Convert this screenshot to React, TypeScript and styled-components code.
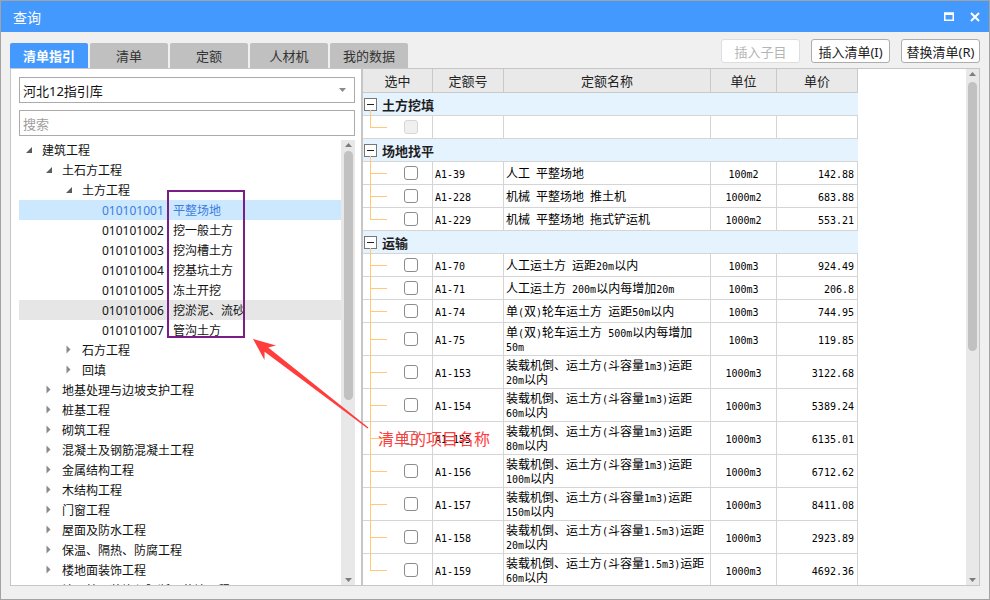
import React from "react";
import styled, { createGlobalStyle } from "styled-components";

const GlobalStyle = createGlobalStyle`
  html, body {
    margin: 0;
    padding: 0;
    background: #ffffff;
  }
  body {
    font-family: "Noto Sans", "Noto Sans CJK SC", sans-serif;
  }
  * {
    box-sizing: border-box;
  }
`;

const ORANGE = "#ffc977";
const GRID = "#d5d5d5";

const Window = styled.div`
    position: relative;
    width: 990px;
    height: 600px;
    border: 1px solid #a3a3a3;
    background: #f0f0f0;
    display: flex;
    flex-direction: column;
    overflow: hidden;
`;

const TitleBar = styled.div`
    flex: none;
    height: 31px;
    background: #4499ff;
    color: #ffffff;
    display: flex;
    align-items: center;
    padding: 0 1px 0 12px;
`;

const TitleText = styled.div`
    flex: 1;
    font-size: 14px;
`;

const TitleButton = styled.div`
    width: 26px;
    height: 20px;
    display: flex;
    align-items: center;
    justify-content: center;
`;

const Body = styled.div`
    flex: 1;
    display: flex;
    flex-direction: column;
    padding: 0 9px;
`;

const TopRow = styled.div`
    flex: none;
    height: 36px;
    display: flex;
    justify-content: space-between;
    align-items: flex-end;
`;

const Tabs = styled.div`
    display: flex;
    gap: 2px;
`;

const Tab = styled.div<{ $active?: boolean }>`
    width: 78px;
    height: 25px;
    display: flex;
    align-items: center;
    justify-content: center;
    border-radius: 2px 2px 0 0;
    background: ${(p) => (p.$active ? "#4499ff" : "#c0c0c0")};
    color: ${(p) => (p.$active ? "#ffffff" : "#333333")};
    font-size: 13px;
    font-weight: ${(p) => (p.$active ? 700 : 400)};
`;

const Actions = styled.div`
    align-self: flex-start;
    margin-top: 7px;
    display: flex;
    gap: 11px;
`;

const ActionButton = styled.div<{ $disabled?: boolean }>`
    width: 79px;
    height: 24px;
    display: flex;
    align-items: center;
    justify-content: center;
    background: #ffffff;
    border: 1px solid ${(p) => (p.$disabled ? "#dedede" : "#adadad")};
    border-radius: 3px;
    color: ${(p) => (p.$disabled ? "#b4b4b4" : "#1a1a1a")};
    font-size: 13px;
`;

const Content = styled.div`
    flex: none;
    height: 518px;
    display: flex;
`;

const LeftPanel = styled.div`
    width: 352px;
    background: #ffffff;
    border: 1px solid #c6c6c6;
    padding: 8px 6px 0 8px;
    display: flex;
    flex-direction: column;
`;

const Field = styled.div<{ $placeholder?: boolean }>`
    flex: none;
    height: 26px;
    border: 1px solid #ababab;
    display: flex;
    align-items: center;
    padding: 0 8px 0 3px;
    font-size: 13px;
    color: ${(p) => (p.$placeholder ? "#a0a0a0" : "#111111")};
    & + & {
        margin-top: 7px;
    }
`;

const FieldText = styled.div`
    flex: 1;
`;

const Tree = styled.div`
    flex: 1;
    margin-top: 4px;
    display: flex;
    overflow: hidden;
`;

const TreeList = styled.div`
    flex: 1;
    overflow: hidden;
`;

const TreeRow = styled.div<{ $level: number; $selected?: boolean; $hover?: boolean }>`
    height: 20px;
    display: flex;
    align-items: center;
    padding-left: ${(p) => p.$level * 20}px;
    font-size: 12px;
    white-space: nowrap;
    color: ${(p) => (p.$selected ? "#3b7ee0" : "#111111")};
    background: ${(p) => (p.$selected ? "#cce8ff" : p.$hover ? "#e6e6e6" : "transparent")};
`;

const Toggle = styled.div`
    flex: none;
    width: 23px;
    height: 20px;
`;

const TreeCode = styled.span`
    flex: none;
    width: 71px;
`;

const ScrollTrack = styled.div<{ $width: number }>`
    flex: none;
    width: ${(p) => p.$width}px;
    background: #e8e8e8;
    display: flex;
    flex-direction: column;
    align-items: center;
`;

const ScrollThumb = styled.div<{ $top: number; $height: number }>`
    margin-top: ${(p) => p.$top}px;
    width: 9px;
    height: ${(p) => p.$height}px;
    border-radius: 5px;
    background: #c1c1c1;
`;

const ScrollFill = styled.div`
    flex: 1;
`;

const RightPanel = styled.div`
    flex: 1;
    background: #ffffff;
    border: 1px solid #c6c6c6;
    display: flex;
`;

const TableArea = styled.div`
    flex: 1;
    overflow: hidden;
`;

const HeaderRow = styled.div`
    width: 495px;
    height: 24px;
    display: flex;
    background: #e9e9e9;
    border-bottom: 1px solid #c9c9c9;
`;

const HeaderCell = styled.div<{ $w: number }>`
    width: ${(p) => p.$w}px;
    flex: none;
    border-right: 1px solid #c9c9c9;
    display: flex;
    align-items: center;
    justify-content: center;
    font-size: 13px;
    color: #222222;
`;

const GroupRow = styled.div`
    position: relative;
    width: 495px;
    height: 23px;
    display: flex;
    align-items: center;
    background: #e5f3ff;
    border-bottom: 1px solid ${GRID};
    &::after {
        content: "";
        position: absolute;
        left: 7px;
        top: 17px;
        bottom: -1px;
        width: 1px;
        background: ${ORANGE};
    }
`;

const MinusBox = styled.div`
    margin-left: 1px;
    width: 13px;
    height: 13px;
    border: 1px solid #777777;
    background: #ffffff;
    display: flex;
    align-items: center;
    justify-content: center;
    &::before {
        content: "";
        width: 7px;
        height: 1px;
        background: #222222;
    }
`;

const GroupTitle = styled.div`
    margin-left: 5px;
    font-size: 13px;
    font-weight: 700;
    color: #1e1e1e;
`;

const ItemRow = styled.div<{ $h: number }>`
    width: 495px;
    height: ${(p) => p.$h}px;
    display: flex;
    border-bottom: 1px solid ${GRID};
    font-family: "Noto Sans CJK SC", sans-serif;
    font-size: 12px;
    color: #000000;
`;

const Cell = styled.div<{ $w: number; $align?: "left" | "center" | "right" }>`
    width: ${(p) => p.$w}px;
    flex: none;
    border-right: 1px solid ${GRID};
    display: flex;
    flex-direction: column;
    justify-content: center;
    align-items: ${(p) => (p.$align === "center" ? "center" : p.$align === "right" ? "flex-end" : "flex-start")};
    padding: 0 ${(p) => (p.$align === "right" ? 3 : 0)}px 0 ${(p) => (p.$align === "left" ? 2 : 0)}px;
    white-space: nowrap;
`;

const TextLine = styled.div`
    height: 14px;
    line-height: 14px;
    overflow: visible;
`;

const LineCell = styled.div<{ $last?: boolean }>`
    position: relative;
    width: 70px;
    flex: none;
    border-right: 1px solid ${GRID};
    display: flex;
    align-items: center;
    padding-left: 41px;
    &::before {
        content: "";
        position: absolute;
        left: 7px;
        top: 0;
        height: ${(p) => (p.$last ? "50%" : "calc(100% + 1px)")};
        width: 1px;
        background: ${ORANGE};
    }
    &::after {
        content: "";
        position: absolute;
        left: 7px;
        top: 50%;
        width: 17px;
        height: 1px;
        background: ${ORANGE};
    }
`;

const Check = styled.div<{ $disabled?: boolean }>`
    width: 14px;
    height: 14px;
    border: 1px solid ${(p) => (p.$disabled ? "#d6d6d6" : "#8c8c8c")};
    border-radius: 3px;
    background: ${(p) => (p.$disabled ? "#f0f0f0" : "#ffffff")};
`;

const Lat = styled.span`
    font-family: "DejaVu Sans Mono", monospace;
    font-size: 10px;
    line-height: 14px;
`;

const Grip = styled.div`
    position: absolute;
    right: 1px;
    bottom: 1px;
    width: 8px;
    height: 8px;
`;

const Overlay = styled.svg`
    position: absolute;
    left: -1px;
    top: -1px;
    pointer-events: none;
`;

const Callout = styled.div`
    position: absolute;
    left: 377px;
    top: 427px;
    font-family: "Noto Sans CJK SC", sans-serif;
    font-size: 16px;
    line-height: 20px;
    color: #ff3d3d;
    pointer-events: none;
`;

const COLS = [70, 71, 207, 66, 81];

type TreeNode = {
    label: string;
    code?: string;
    level: number;
    state: "open" | "closed" | "leaf";
    selected?: boolean;
    hover?: boolean;
};

const treeRows: TreeNode[] = [
    { label: "建筑工程", level: 0, state: "open" },
    { label: "土石方工程", level: 1, state: "open" },
    { label: "土方工程", level: 2, state: "open" },
    { code: "010101001", label: "平整场地", level: 3, state: "leaf", selected: true },
    { code: "010101002", label: "挖一般土方", level: 3, state: "leaf" },
    { code: "010101003", label: "挖沟槽土方", level: 3, state: "leaf" },
    { code: "010101004", label: "挖基坑土方", level: 3, state: "leaf" },
    { code: "010101005", label: "冻土开挖", level: 3, state: "leaf" },
    { code: "010101006", label: "挖淤泥、流砂", level: 3, state: "leaf", hover: true },
    { code: "010101007", label: "管沟土方", level: 3, state: "leaf" },
    { label: "石方工程", level: 2, state: "closed" },
    { label: "回填", level: 2, state: "closed" },
    { label: "地基处理与边坡支护工程", level: 1, state: "closed" },
    { label: "桩基工程", level: 1, state: "closed" },
    { label: "砌筑工程", level: 1, state: "closed" },
    { label: "混凝土及钢筋混凝土工程", level: 1, state: "closed" },
    { label: "金属结构工程", level: 1, state: "closed" },
    { label: "木结构工程", level: 1, state: "closed" },
    { label: "门窗工程", level: 1, state: "closed" },
    { label: "屋面及防水工程", level: 1, state: "closed" },
    { label: "保温、隔热、防腐工程", level: 1, state: "closed" },
    { label: "楼地面装饰工程", level: 1, state: "closed" },
    { label: "墙、柱面装饰与隔断、幕墙工程", level: 1, state: "closed" },
];

type Item = { code: string; name: string[]; unit: string; price: string };
type Group = { title: string; items: Item[] };

const far = (first: string, second: string, code: string, price: string): Item => ({
    code,
    name: [first, second],
    unit: "1000m3",
    price,
});

const groups: Group[] = [
    { title: "土方挖填", items: [] },
    {
        title: "场地找平",
        items: [
            { code: "A1-39", name: ["人工 平整场地"], unit: "100m2", price: "142.88" },
            { code: "A1-228", name: ["机械 平整场地 推土机"], unit: "1000m2", price: "683.88" },
            { code: "A1-229", name: ["机械 平整场地 拖式铲运机"], unit: "1000m2", price: "553.21" },
        ],
    },
    {
        title: "运输",
        items: [
            { code: "A1-70", name: ["人工运土方 运距20m以内"], unit: "100m3", price: "924.49" },
            { code: "A1-71", name: ["人工运土方 200m以内每增加20m"], unit: "100m3", price: "206.8" },
            { code: "A1-74", name: ["单(双)轮车运土方 运距50m以内"], unit: "100m3", price: "744.95" },
            { code: "A1-75", name: ["单(双)轮车运土方 500m以内每增加", "50m"], unit: "100m3", price: "119.85" },
            far("装载机倒、运土方(斗容量1m3)运距", "20m以内", "A1-153", "3122.68"),
            far("装载机倒、运土方(斗容量1m3)运距", "60m以内", "A1-154", "5389.24"),
            far("装载机倒、运土方(斗容量1m3)运距", "80m以内", "A1-155", "6135.01"),
            far("装载机倒、运土方(斗容量1m3)运距", "100m以内", "A1-156", "6712.62"),
            far("装载机倒、运土方(斗容量1m3)运距", "150m以内", "A1-157", "8411.08"),
            far("装载机倒、运土方(斗容量1.5m3)运距", "20m以内", "A1-158", "2923.89"),
            far("装载机倒、运土方(斗容量1.5m3)运距", "60m以内", "A1-159", "4692.36"),
        ],
    },
];

// ascii runs get the narrow mono face, the rest stays CJK
const mixed = (text: string) =>
    text
        .split(/([\x20-\x7e]+)/)
        .filter(Boolean)
        .map((part, i) => (/^[\x20-\x7e]+$/.test(part) ? <Lat key={i}>{part}</Lat> : <span key={i}>{part}</span>));

const ToggleIcon: React.FC<{ state: TreeNode["state"] }> = ({ state }) => (
    <Toggle>
        {state === "open" && (
            <svg width="23" height="20">
                <polygon points="13,7 13,13 7,13" fill="#5c5c5c" />
            </svg>
        )}
        {state === "closed" && (
            <svg width="23" height="20">
                <polygon points="7.5,5.5 7.5,13.5 11.5,9.5" fill="#8a8a8a" />
            </svg>
        )}
    </Toggle>
);

const Arrow: React.FC<{ down?: boolean }> = ({ down }) => (
    <svg width="13" height="11">
        <polygon points={down ? "3,4 10,4 6.5,8" : "3,7 10,7 6.5,3"} fill="#7d7d7d" />
    </svg>
);

const App: React.FC = () => {
    return (
        <>
            <GlobalStyle />
            <Window>
                <TitleBar>
                    <TitleText>查询</TitleText>
                    <TitleButton>
                        <svg width="10" height="9">
                            <rect x="0.75" y="1.25" width="8.5" height="7" fill="none" stroke="#ffffff" strokeWidth="1.5" />
                            <rect x="0" y="0.5" width="10" height="2.5" fill="#ffffff" />
                        </svg>
                    </TitleButton>
                    <TitleButton>
                        <svg width="10" height="10">
                            <path d="M1 1 L9 9 M9 1 L1 9" stroke="#ffffff" strokeWidth="2" />
                        </svg>
                    </TitleButton>
                </TitleBar>
                <Body>
                    <TopRow>
                        <Tabs>
                            <Tab $active>清单指引</Tab>
                            <Tab>清单</Tab>
                            <Tab>定额</Tab>
                            <Tab>人材机</Tab>
                            <Tab>我的数据</Tab>
                        </Tabs>
                        <Actions>
                            <ActionButton $disabled>插入子目</ActionButton>
                            <ActionButton>插入清单(I)</ActionButton>
                            <ActionButton>替换清单(R)</ActionButton>
                        </Actions>
                    </TopRow>
                    <Content>
                        <LeftPanel>
                            <Field>
                                <FieldText>河北12指引库</FieldText>
                                <svg width="7" height="4">
                                    <polygon points="0,0 7,0 3.5,4" fill="#8a8a8a" />
                                </svg>
                            </Field>
                            <Field $placeholder>搜索</Field>
                            <Tree>
                                <TreeList>
                                    {treeRows.map((row, i) => (
                                        <TreeRow key={i} $level={row.level} $selected={row.selected} $hover={row.hover}>
                                            {row.state === "leaf" ? <Toggle /> : <ToggleIcon state={row.state} />}
                                            {row.code && <TreeCode>{row.code}</TreeCode>}
                                            <span>{row.label}</span>
                                        </TreeRow>
                                    ))}
                                </TreeList>
                                <ScrollTrack $width={14}>
                                    <Arrow />
                                    <ScrollThumb $top={0} $height={249} />
                                    <ScrollFill />
                                    <Arrow down />
                                </ScrollTrack>
                            </Tree>
                        </LeftPanel>
                        <RightPanel>
                            <TableArea>
                                <HeaderRow>
                                    <HeaderCell $w={COLS[0]}>选中</HeaderCell>
                                    <HeaderCell $w={COLS[1]}>定额号</HeaderCell>
                                    <HeaderCell $w={COLS[2]}>定额名称</HeaderCell>
                                    <HeaderCell $w={COLS[3]}>单位</HeaderCell>
                                    <HeaderCell $w={COLS[4]}>单价</HeaderCell>
                                </HeaderRow>
                                {groups.map((group) => (
                                    <React.Fragment key={group.title}>
                                        <GroupRow>
                                            <MinusBox />
                                            <GroupTitle>{group.title}</GroupTitle>
                                        </GroupRow>
                                        {group.items.length === 0 ? (
                                            <ItemRow $h={23}>
                                                <LineCell $last>
                                                    <Check $disabled />
                                                </LineCell>
                                                <Cell $w={COLS[1]} />
                                                <Cell $w={COLS[2]} />
                                                <Cell $w={COLS[3]} />
                                                <Cell $w={COLS[4]} />
                                            </ItemRow>
                                        ) : (
                                            group.items.map((item, i) => (
                                                <ItemRow key={item.code} $h={item.name.length > 1 ? 33 : 23}>
                                                    <LineCell $last={i === group.items.length - 1}>
                                                        <Check />
                                                    </LineCell>
                                                    <Cell $w={COLS[1]} $align="left">
                                                        <TextLine>
                                                            <Lat>{item.code}</Lat>
                                                        </TextLine>
                                                    </Cell>
                                                    <Cell $w={COLS[2]} $align="left">
                                                        {item.name.map((line) => (
                                                            <TextLine key={line}>{mixed(line)}</TextLine>
                                                        ))}
                                                    </Cell>
                                                    <Cell $w={COLS[3]} $align="center">
                                                        <TextLine>
                                                            <Lat>{item.unit}</Lat>
                                                        </TextLine>
                                                    </Cell>
                                                    <Cell $w={COLS[4]} $align="right">
                                                        <TextLine>
                                                            <Lat>{item.price}</Lat>
                                                        </TextLine>
                                                    </Cell>
                                                </ItemRow>
                                            ))
                                        )}
                                    </React.Fragment>
                                ))}
                            </TableArea>
                            <ScrollTrack $width={13}>
                                <Arrow />
                                <ScrollThumb $top={2} $height={269} />
                                <ScrollFill />
                                <Arrow down />
                            </ScrollTrack>
                        </RightPanel>
                    </Content>
                </Body>
                <Grip>
                    <svg width="8" height="8">
                        <rect x="6" y="0" width="1.5" height="1.5" fill="#b5b5b5" />
                        <rect x="3" y="3" width="1.5" height="1.5" fill="#b5b5b5" />
                        <rect x="6" y="3" width="1.5" height="1.5" fill="#b5b5b5" />
                        <rect x="0" y="6" width="1.5" height="1.5" fill="#b5b5b5" />
                        <rect x="3" y="6" width="1.5" height="1.5" fill="#b5b5b5" />
                        <rect x="6" y="6" width="1.5" height="1.5" fill="#b5b5b5" />
                    </svg>
                </Grip>
                <Overlay width="990" height="600">
                    <rect x="168" y="191" width="76" height="146" fill="none" stroke="#7b1c87" strokeWidth="2" />
                    <polygon
                        points="253,339 276,345.5 268.2,347.5 368.4,427.5 367.6,428.5 264.6,351.8 264.5,360"
                        fill="#ff3d3d"
                    />
                </Overlay>
                <Callout>清单的项目名称</Callout>
            </Window>
        </>
    );
};

export default App;
